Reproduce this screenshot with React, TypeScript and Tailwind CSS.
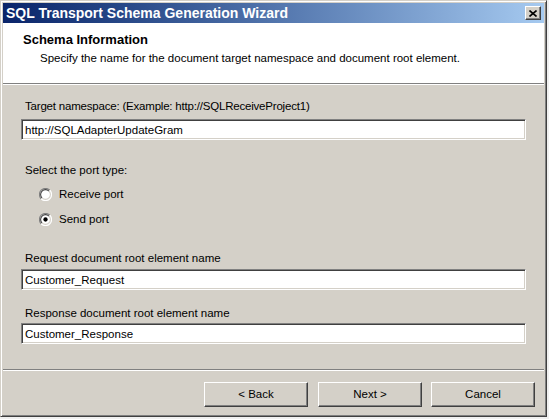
const font = { fontFamily: '"Liberation Sans", Arial, sans-serif' };

function Field({ value }: { value: string }) {
  return (
    <div className="h-[21px] w-[505px] bg-white border border-t-[#808080] border-l-[#808080] border-b-white border-r-white shadow-[inset_1px_1px_0_#404040,inset_-1px_-1px_0_#d4d0c8] flex items-center pl-[3px] text-[11.5px] text-black">
      {value}
    </div>
  );
}

function Radio({ label, checked }: { label: string; checked?: boolean }) {
  return (
    <div className="flex items-center h-[16px] pl-[18px] gap-[7px]">
      <svg width="13" height="13" viewBox="0 0 12 12">
        <circle cx="6" cy="6" r="5.5" fill="#fff" />
        <path d="M10 2 A5.5 5.5 0 0 0 2 10" fill="none" stroke="#808080" strokeWidth="1" />
        <path d="M9.2 2.8 A4.5 4.5 0 0 0 2.8 9.2" fill="none" stroke="#404040" strokeWidth="1" />
        <path d="M2 10 A5.5 5.5 0 0 0 10 2" fill="none" stroke="#fff" strokeWidth="1" />
        <path d="M2.8 9.2 A4.5 4.5 0 0 0 9.2 2.8" fill="none" stroke="#d4d0c8" strokeWidth="1" />
        {checked && <circle cx="6" cy="6" r="2" fill="#000" />}
      </svg>
      <span className="text-[11.5px]">{label}</span>
    </div>
  );
}

function Btn({ label }: { label: string }) {
  return (
    <button className="w-[104px] h-[25px] bg-[#d4d0c8] border border-t-white border-l-white border-r-[#404040] border-b-[#404040] shadow-[inset_-1px_-1px_0_#808080] text-[11.5px] text-black">
      {label}
    </button>
  );
}

export default function App() {
  return (
    <div className="w-[549px] h-[419px] bg-[#f0f0f0]" style={font}>
      <div className="w-[547px] h-[417px] bg-[#d4d0c8] border border-t-[#d4d0c8] border-l-[#d4d0c8] border-r-[#404040] border-b-[#404040] shadow-[inset_1px_1px_0_#fff,inset_-1px_-1px_0_#808080] p-[2px] flex flex-col">
        {/* title bar */}
        <div className="h-[20px] flex items-center justify-between bg-gradient-to-r from-[#0a246a] to-[#a6caf0] pl-[3px] pr-[3px]">
          <span className="text-white font-bold text-[14px]">SQL Transport Schema Generation Wizard</span>
          <div className="w-[16px] h-[14px] bg-[#d4d0c8] border border-t-white border-l-white border-r-[#404040] border-b-[#404040] shadow-[inset_-1px_-1px_0_#808080] flex items-center justify-center">
            <svg width="8" height="7" viewBox="0 0 8 7">
              <path d="M0.5 0.5 L7.5 6.5 M7.5 0.5 L0.5 6.5" stroke="#000" strokeWidth="1.6" />
            </svg>
          </div>
        </div>

        {/* header */}
        <div className="h-[60px] bg-white pl-[20px] pt-[10px]">
          <div className="font-bold text-[13px] leading-[14px]">Schema Information</div>
          <div className="text-[11.5px] leading-[14px] pl-[17px] mt-[4px]">
            Specify the name for the document target namespace and document root element.
          </div>
        </div>
        <div className="h-px bg-[#808080]" />
        <div className="h-px bg-white" />

        {/* body */}
        <div className="flex-1 flex flex-col pl-[18px] text-[11.5px] leading-[14px]">
          <div className="mt-[14px] pl-[4px] tracking-[-0.2px]">Target namespace: (Example: http://SQLReceiveProject1)</div>
          <div className="mt-[6px]">
            <Field value="http://SQLAdapterUpdateGram" />
          </div>
          <div className="mt-[23px] pl-[4px]">Select the port type:</div>
          <div className="mt-[9px]">
            <Radio label="Receive port" />
          </div>
          <div className="mt-[9px]">
            <Radio label="Send port" checked />
          </div>
          <div className="mt-[24px] pl-[4px]">Request document root element name</div>
          <div className="mt-[4px]">
            <Field value="Customer_Request" />
          </div>
          <div className="mt-[16px] pl-[4px]">Response document root element name</div>
          <div className="mt-[3px]">
            <Field value="Customer_Response" />
          </div>
        </div>

        {/* footer */}
        <div className="h-px bg-[#808080]" />
        <div className="h-px bg-white" />
        <div className="h-[43px] flex items-start justify-end pt-[11px] pr-[9px]">
          <Btn label="< Back" />
          <div className="w-[10px]" />
          <Btn label="Next >" />
          <div className="w-[9px]" />
          <Btn label="Cancel" />
        </div>
      </div>
    </div>
  );
}
